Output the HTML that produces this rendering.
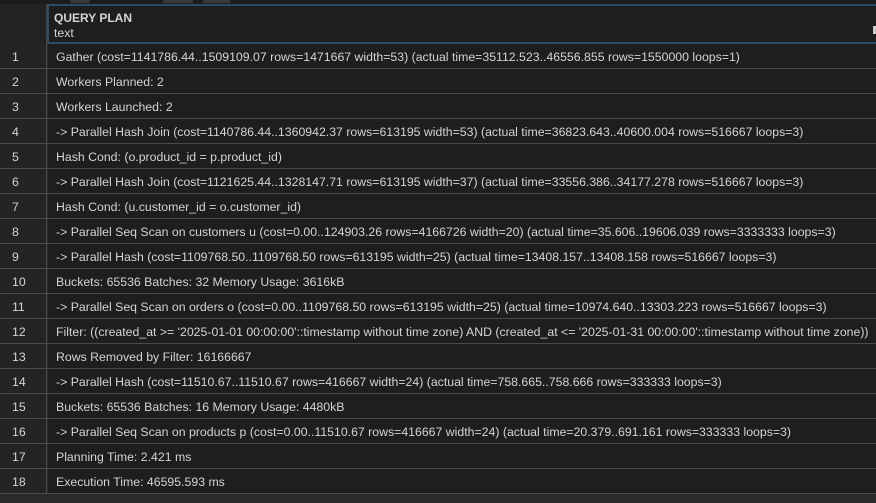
<!DOCTYPE html>
<html><head><meta charset="utf-8"><style>
*{margin:0;padding:0;box-sizing:border-box}
body{width:876px;height:503px;background:#2a2a2a;font-family:"Liberation Sans",sans-serif;font-size:12.3px;color:#d4d4d4;overflow:hidden;position:relative}
.top{position:absolute;left:0;top:0;width:876px;height:5px;background:#1c1c1c}
.tab{position:absolute;top:0;height:3px;background:#3a3a3a}
.hdr{position:absolute;left:47px;top:4px;width:829px;height:40px;background:#1e1e1e;border:2px solid #2f4a5e;border-right:none}
.hdrnum{position:absolute;left:0;top:4px;width:47px;height:40px;background:#232323;border-right:1px solid #444}
.hdr b{position:absolute;left:5px;top:5px;font-size:12px}
.hdr span{position:absolute;left:5px;top:20px;font-size:12.3px}
.row{position:absolute;left:0;width:876px;height:25px;border-bottom:1px solid #4a4a4a}
.n{position:absolute;left:0;top:0;width:47px;height:24px;background:#242424;border-right:1px solid #4a4a4a;padding:6px 0 0 12px}
.t{position:absolute;left:48px;top:0;width:828px;height:24px;background:#1e1e1e;padding:6px 0 0 8px;white-space:nowrap}
.mk{position:absolute;right:0;top:20px;width:3px;height:8px;background:#ccc}
</style></head><body>
<div class="top"></div>
<div class="tab" style="left:70px;width:20px"></div>
<div class="tab" style="left:163px;width:30px"></div>
<div class="tab" style="left:203px;width:27px"></div>
<div class="hdrnum"></div>
<div class="hdr"><b>QUERY PLAN</b><span>text</span><div class="mk"></div></div>
<div class="row" style="top:44px"><div class="n">1</div><div class="t">Gather (cost=1141786.44..1509109.07 rows=1471667 width=53) (actual time=35112.523..46556.855 rows=1550000 loops=1)</div></div>
<div class="row" style="top:69px"><div class="n">2</div><div class="t">Workers Planned: 2</div></div>
<div class="row" style="top:94px"><div class="n">3</div><div class="t">Workers Launched: 2</div></div>
<div class="row" style="top:119px"><div class="n">4</div><div class="t">-&gt; Parallel Hash Join (cost=1140786.44..1360942.37 rows=613195 width=53) (actual time=36823.643..40600.004 rows=516667 loops=3)</div></div>
<div class="row" style="top:144px"><div class="n">5</div><div class="t">Hash Cond: (o.product_id = p.product_id)</div></div>
<div class="row" style="top:169px"><div class="n">6</div><div class="t">-&gt; Parallel Hash Join (cost=1121625.44..1328147.71 rows=613195 width=37) (actual time=33556.386..34177.278 rows=516667 loops=3)</div></div>
<div class="row" style="top:194px"><div class="n">7</div><div class="t">Hash Cond: (u.customer_id = o.customer_id)</div></div>
<div class="row" style="top:219px"><div class="n">8</div><div class="t">-&gt; Parallel Seq Scan on customers u (cost=0.00..124903.26 rows=4166726 width=20) (actual time=35.606..19606.039 rows=3333333 loops=3)</div></div>
<div class="row" style="top:244px"><div class="n">9</div><div class="t">-&gt; Parallel Hash (cost=1109768.50..1109768.50 rows=613195 width=25) (actual time=13408.157..13408.158 rows=516667 loops=3)</div></div>
<div class="row" style="top:269px"><div class="n">10</div><div class="t">Buckets: 65536 Batches: 32 Memory Usage: 3616kB</div></div>
<div class="row" style="top:294px"><div class="n">11</div><div class="t">-&gt; Parallel Seq Scan on orders o (cost=0.00..1109768.50 rows=613195 width=25) (actual time=10974.640..13303.223 rows=516667 loops=3)</div></div>
<div class="row" style="top:319px"><div class="n">12</div><div class="t">Filter: ((created_at &gt;= '2025-01-01 00:00:00'::timestamp without time zone) AND (created_at &lt;= '2025-01-31 00:00:00'::timestamp without time zone))</div></div>
<div class="row" style="top:344px"><div class="n">13</div><div class="t">Rows Removed by Filter: 16166667</div></div>
<div class="row" style="top:369px"><div class="n">14</div><div class="t">-&gt; Parallel Hash (cost=11510.67..11510.67 rows=416667 width=24) (actual time=758.665..758.666 rows=333333 loops=3)</div></div>
<div class="row" style="top:394px"><div class="n">15</div><div class="t">Buckets: 65536 Batches: 16 Memory Usage: 4480kB</div></div>
<div class="row" style="top:419px"><div class="n">16</div><div class="t">-&gt; Parallel Seq Scan on products p (cost=0.00..11510.67 rows=416667 width=24) (actual time=20.379..691.161 rows=333333 loops=3)</div></div>
<div class="row" style="top:444px"><div class="n">17</div><div class="t">Planning Time: 2.421 ms</div></div>
<div class="row" style="top:469px"><div class="n">18</div><div class="t">Execution Time: 46595.593 ms</div></div>
</body></html>
